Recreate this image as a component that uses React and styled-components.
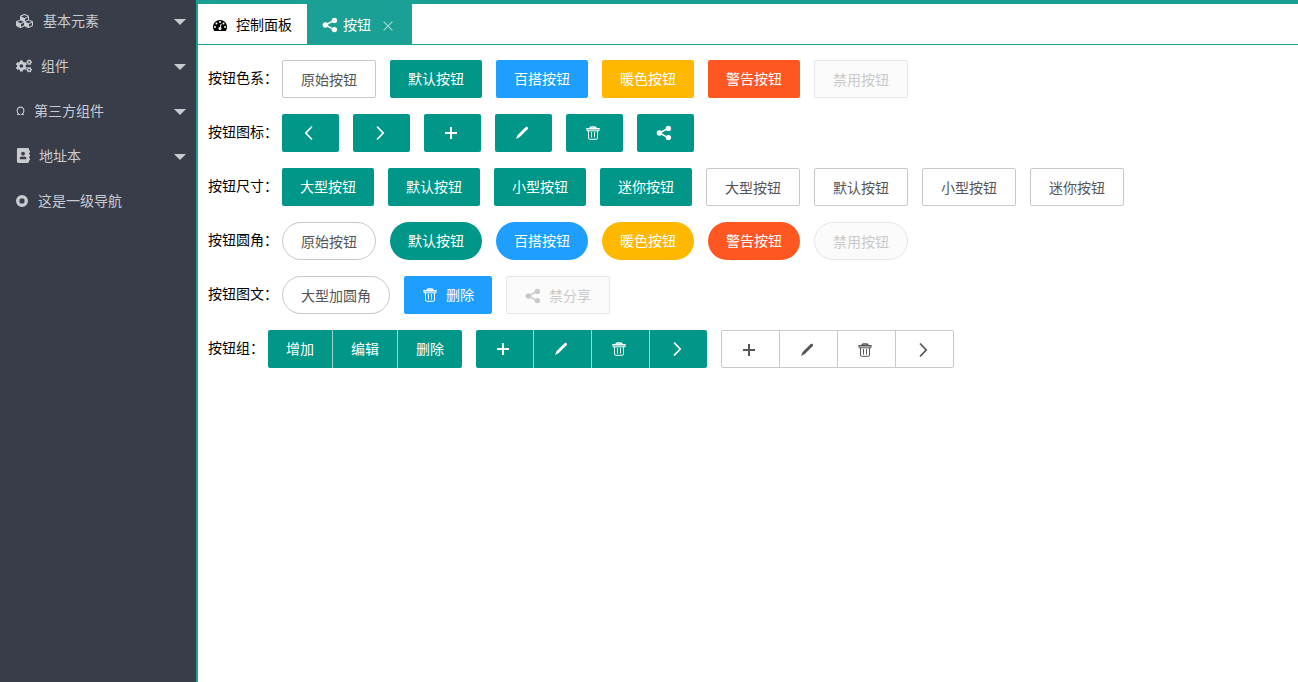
import React, { useState } from "react"
import styled, { createGlobalStyle, css } from "styled-components"
import { FaAddressBook, FaCogs } from "react-icons/fa"

const colors = {
  sidebar: "#393d49",
  sidebarText: "#c9cbd1",
  accent: "#1aa094",
  primary: "#009688",
  normal: "#1e9fff",
  warm: "#ffb800",
  danger: "#ff5722",
  border: "#c9c9c9",
  text: "#555",
}

const GlobalStyle = createGlobalStyle`
  * {
    box-sizing: border-box;
  }

  body {
    margin: 0;
    background: #fff;
    color: #000;
    font: 14px/20px "Liberation Sans", "Noto Sans CJK SC", sans-serif;
  }

  button {
    font: inherit;
    cursor: pointer;
  }
`

const Page = styled.div`
  display: flex;
  min-height: 100vh;
`

const Sidebar = styled.nav`
  flex: 0 0 198px;
  background: ${colors.sidebar};
  border-right: 2px solid ${colors.accent};
`

const NavItem = styled.a`
  display: flex;
  align-items: center;
  height: 45px;
  padding: 0 10px 4px 16px;
  color: ${colors.sidebarText};
  text-decoration: none;

  svg {
    flex: none;
    margin-right: ${(props) => props.$gap || 9}px;
  }
`

const Caret = styled.span`
  margin: 2px 0 0 auto;
  border: 6px solid transparent;
  border-top-color: ${colors.sidebarText};
  border-bottom: 0;
`

const Main = styled.main`
  flex: 1;
  min-width: 0;
`

const TabBar = styled.div`
  display: flex;
  border-top: 4px solid ${colors.accent};
  border-bottom: 1px solid ${colors.accent};
`

const Tab = styled.div`
  display: flex;
  align-items: center;
  height: 40px;
  padding: 0 15px;
  background: ${(props) => (props.$active ? colors.accent : "#fff")};
  color: ${(props) => (props.$active ? "#fff" : "#000")};
`

const TabButton = styled.button`
  display: flex;
  align-items: center;
  gap: ${(props) => props.$gap}px;
  padding: 2px 0 0;
  border: 0;
  background: none;
  color: inherit;
`

const CloseButton = styled.button`
  display: flex;
  margin: 4px 4px 0 12px;
  padding: 0;
  border: 0;
  background: none;
  color: #a3d9d4;
`

const Content = styled.div`
  display: flex;
  flex-direction: column;
  gap: 16px;
  padding: 15px 10px;
`

const Row = styled.section`
  display: flex;
  flex-wrap: wrap;
  gap: 14px;
`

const RowLabel = styled.h2`
  margin: 8px -10px 0 0;
  font: inherit;
`

const variants = {
  outline: css`
    padding-top: 2px;
    border: 1px solid ${colors.border};
    background: #fff;
    color: ${colors.text};
  `,
  primary: css`
    background: ${colors.primary};
  `,
  normal: css`
    background: ${colors.normal};
  `,
  warm: css`
    background: ${colors.warm};
  `,
  danger: css`
    background: ${colors.danger};
  `,
  disabled: css`
    padding-top: 2px;
    border: 1px solid #e6e6e6;
    background: #fbfbfb;
    color: ${colors.border};
    cursor: not-allowed;
  `,
}

const Button = styled.button`
  display: flex;
  align-items: center;
  justify-content: center;
  gap: 8px;
  height: 38px;
  padding: 0 18px;
  border: 0;
  border-radius: ${(props) => (props.$round ? 19 : 2)}px;
  color: #fff;
  white-space: nowrap;
  ${(props) => variants[props.$variant || "primary"]}
`

const IconButton = styled(Button)`
  width: 57px;
  padding-left: 0;
  padding-right: 3px;
`

const Group = styled.div`
  display: flex;

  ${Button}, ${IconButton} {
    border-radius: 0;
  }

  ${Button}:first-child, ${IconButton}:first-child {
    border-radius: 2px 0 0 2px;
  }

  ${Button}:last-child, ${IconButton}:last-child {
    border-radius: 0 2px 2px 0;
  }

  ${(props) => props.$outline ? css`
    ${IconButton} {
      width: 59px;
    }

    ${IconButton} + ${IconButton} {
      margin-left: -1px;
    }
  ` : css`
    gap: 1px;
    background: linear-gradient(#99d5cf, #99d5cf) center / calc(100% - 8px) 100% no-repeat;
  `}
`

const Icon = ({ size = 16, children }) => (
  <svg
    width={size}
    height={size}
    viewBox="0 0 16 16"
    fill="none"
    stroke="currentColor"
    strokeWidth="1.7"
    aria-hidden="true"
  >
    {children}
  </svg>
)

const Prev = () => <Icon><path d="M11 1.500 4.800 8l6.200 6.500" /></Icon>
const Next = () => <Icon><path d="M5 1.500 11.200 8 5 14.500" /></Icon>
const Plus = () => <Icon><path d="M8 2v12M2 8h12" strokeWidth="2" /></Icon>

const Pencil = () => (
  <Icon>
    <path
      d="M11.500 2.200c.7-.6 1.500-.6 2.100 0s.6 1.400 0 2.100L5.800 12 2 14l1.700-4z"
      fill="currentColor"
      stroke="none"
    />
  </Icon>
)

const Trash = () => (
  <Icon>
    <path d="M1.300 3.800h13.400M5 3.500Q5 2 6.500 2h3Q11 2 11 3.500" strokeWidth="1.500" />
    <path
      d="M2 4.500v1.300h12V4.500M3.500 6v7q0 1.300 1.300 1.300h6.400q1.300 0 1.300-1.300V6M6.500 7v5.500M9.500 7v5.500"
      strokeWidth="1"
    />
  </Icon>
)

const Share = () => (
  <Icon>
    <path d="M12.500 3.200 3.500 8l9 4.800" strokeWidth="1.500" />
    <g fill="currentColor" stroke="none">
      <circle cx="12.400" cy="3.400" r="2.700" />
      <circle cx="3.400" cy="8" r="2.700" />
      <circle cx="12.400" cy="12.600" r="2.700" />
    </g>
  </Icon>
)

const Ring = () => (
  <Icon size={9}>
    <path d="M2 15h3.500Q2 12.500 2 8.500a6 6.500 0 0 1 12 0q0 4-3.500 6.500H14" strokeWidth="1.900" />
  </Icon>
)

const Close = () => <Icon size={10}><path d="m1 1 14 14M15 1 1 15" strokeWidth="1.900" /></Icon>

const Stop = () => (
  <svg width="12" height="12" viewBox="0 0 12 12" fill="currentColor" aria-hidden="true">
    <path
      fillRule="evenodd"
      d="M6 0a6 6 0 1 1 0 12A6 6 0 0 1 6 0zM5 3.500Q3.500 3.500 3.500 5v2q0 1.500 1.500 1.500h2q1.500 0 1.500-1.500V5Q8.500 3.500 7 3.500z"
    />
  </svg>
)

const Cubes = () => (
  <svg width="18" height="14" viewBox="0 0 2304 1792" fill="currentColor" aria-hidden="true">
    <path d="M640 1632l384-192v-314l-384 164v342zm-64-454l404-173-404-173-404 173zm1088 454l384-192v-314l-384 164v342zm-64-454l404-173-404-173-404 173zm-448-293l384-165v-266l-384 164v267zm-64-379l441-189-441-189-441 189zm1088 518v416q0 36-19 67t-52 47l-448 224q-25 14-57 14t-57-14l-448-224q-4-2-7-4-2 2-7 4l-448 224q-25 14-57 14t-57-14l-448-224q-33-16-52-47t-19-67v-416q0-38 21.500-70t56.500-48l434-186v-400q0-38 21.500-70t56.500-48l448-192q23-10 50-10t50 10l448 192q35 16 56.500 48t21.500 70v400l434 186q36 16 57 48t21 70z" />
  </svg>
)

const Dashboard = () => (
  <svg width="14" height="14" viewBox="0 0 1792 1792" aria-hidden="true">
    <path
      d="M1792 1152q0 261-141 483-19 29-54 29H195q-35 0-54-29Q0 1414 0 1152q0-182 71-348t191-286 286-191 348-71 348 71 286 191 191 286 71 348z"
      fill="currentColor"
    />
    <g fill="#fff">
      <circle cx="256" cy="1152" r="128" />
      <circle cx="448" cy="704" r="128" />
      <circle cx="896" cy="512" r="128" />
      <circle cx="1344" cy="704" r="128" />
      <circle cx="1536" cy="1152" r="128" />
      <path d="M1004 1185l101-382q6-26-7.500-48.500t-38.500-29.500-48 6.500-30 39.500l-101 382q-60 5-107 43.500t-63 98.500q-20 77 20 146t117 89 146-20 89-117q16-60-6-117t-72-91z" />
    </g>
  </svg>
)

const navItems = [
  { title: "基本元素", icon: <Cubes />, expandable: true },
  { title: "组件", icon: <FaCogs size={16} />, expandable: true },
  { title: "第三方组件", icon: <Ring />, expandable: true },
  { title: "地址本", icon: <FaAddressBook size={15} />, gap: 8, expandable: true },
  { title: "这是一级导航", icon: <Stop />, gap: 10 },
]

const palette = [
  ["原始按钮", "outline"],
  ["默认按钮", "primary"],
  ["百搭按钮", "normal"],
  ["暖色按钮", "warm"],
  ["警告按钮", "danger"],
  ["禁用按钮", "disabled"],
]

const sizes = ["大型按钮", "默认按钮", "小型按钮", "迷你按钮"]

const iconButtons = [
  ["上一页", Prev],
  ["下一页", Next],
  ["增加", Plus],
  ["编辑", Pencil],
  ["删除", Trash],
  ["分享", Share],
]

const groupIcons = [
  ["增加", Plus],
  ["编辑", Pencil],
  ["删除", Trash],
  ["下一页", Next],
]

const PaletteRow = ({ label, round }) => (
  <Row>
    <RowLabel>{label}</RowLabel>
    {palette.map(([text, variant]) => (
      <Button
        key={text}
        type="button"
        $variant={variant}
        $round={round}
        disabled={variant === "disabled"}
      >
        {text}
      </Button>
    ))}
  </Row>
)

const IconButtons = ({ items, variant }) => items.map(([title, Glyph]) => (
  <IconButton key={title} type="button" aria-label={title} $variant={variant}>
    <Glyph />
  </IconButton>
))

const App = () => {
  const [tabOpen, setTabOpen] = useState(true)

  return (
    <Page>
      <GlobalStyle />
      <Sidebar>
        {navItems.map((item) => (
          <NavItem key={item.title} href="#" $gap={item.gap}>
            {item.icon}
            {item.title}
            {item.expandable && <Caret />}
          </NavItem>
        ))}
      </Sidebar>

      <Main>
        <TabBar>
          <Tab>
            <TabButton type="button" $gap={9}>
              <Dashboard />
              控制面板
            </TabButton>
          </Tab>
          {tabOpen && (
            <Tab $active>
              <TabButton type="button" $gap={5}>
                <Share />
                按钮
              </TabButton>
              <CloseButton type="button" aria-label="关闭" onClick={() => setTabOpen(false)}>
                <Close />
              </CloseButton>
            </Tab>
          )}
        </TabBar>

        <Content>
          <PaletteRow label="按钮色系：" />

          <Row>
            <RowLabel>按钮图标：</RowLabel>
            <IconButtons items={iconButtons} />
          </Row>

          <Row>
            <RowLabel>按钮尺寸：</RowLabel>
            {sizes.map((text) => <Button key={text} type="button">{text}</Button>)}
            {sizes.map((text) => (
              <Button key={text} type="button" $variant="outline">{text}</Button>
            ))}
          </Row>

          <PaletteRow label="按钮圆角：" round />

          <Row>
            <RowLabel>按钮图文：</RowLabel>
            <Button type="button" $variant="outline" $round>大型加圆角</Button>
            <Button type="button" $variant="normal"><Trash />删除</Button>
            <Button type="button" $variant="disabled" disabled><Share />禁分享</Button>
          </Row>

          <Row>
            <RowLabel>按钮组：</RowLabel>
            <Group>
              <Button type="button">增加</Button>
              <Button type="button">编辑</Button>
              <Button type="button">删除</Button>
            </Group>
            <Group>
              <IconButtons items={groupIcons} />
            </Group>
            <Group $outline>
              <IconButtons items={groupIcons} variant="outline" />
            </Group>
          </Row>
        </Content>
      </Main>
    </Page>
  )
}

export default App
